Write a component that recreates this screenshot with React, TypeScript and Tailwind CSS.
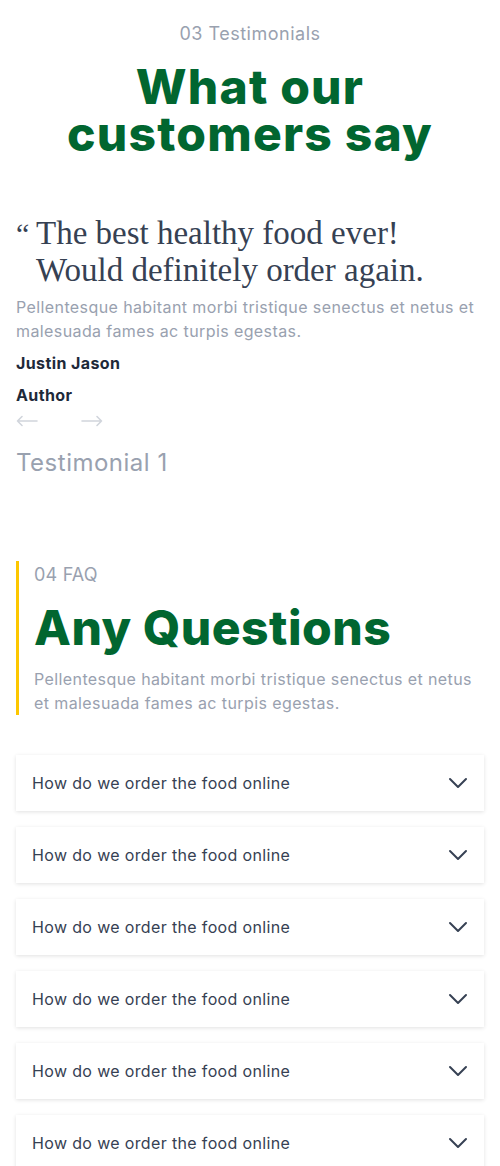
import React from "react";

const faqs = Array.from({ length: 6 }, () => "How do we order the food online");

function Chevron() {
  return (
    <svg width="20" height="12" viewBox="0 0 20 12" fill="none" className="text-gray-700">
      <path d="M2 2l8 8 8-8" stroke="currentColor" strokeWidth="2" strokeLinecap="round" strokeLinejoin="round" />
    </svg>
  );
}

function Arrow({ dir }: { dir: "left" | "right" }) {
  return (
    <svg width="22" height="12" viewBox="0 0 22 12" fill="none" className="text-gray-300">
      {dir === "left" ? (
        <path d="M21 6H1.5M1.5 6l4.5-4.5M1.5 6l4.5 4.5" stroke="currentColor" strokeWidth="1.6" strokeLinecap="round" />
      ) : (
        <path d="M1 6h19.5M20.5 6L16 1.5M20.5 6L16 10.5" stroke="currentColor" strokeWidth="1.6" strokeLinecap="round" />
      )}
    </svg>
  );
}

export default function App() {
  return (
    <div className="w-full bg-white font-['Inter',sans-serif]">
      {/* Testimonials */}
      <section className="px-4 pt-5">
        <p className="text-center text-lg leading-7 tracking-[0.5px] text-gray-400">03 Testimonials</p>
        <h2 className="mt-[15px] text-center text-5xl font-extrabold leading-[47px] tracking-[1.2px] text-green-800">
          What our
          <br />
          customers say
        </h2>

        <div className="mt-[58px] flex font-['Liberation_Serif',serif] text-[33px] leading-[37px] text-gray-700">
          <span className="w-5 shrink-0 text-[30px]">“</span>
          <p>
            The best healthy food ever!
            <br />
            Would definitely order again.
          </p>
        </div>
        <p className="mt-[6px] text-base leading-6 tracking-[0.4px] text-gray-400">
          Pellentesque habitant morbi tristique senectus et netus et malesuada fames ac turpis egestas.
        </p>
        <p className="mt-2 text-base font-bold leading-6 tracking-[0.4px] text-gray-800">Justin Jason</p>
        <p className="mt-2 text-base font-bold leading-6 tracking-[0.4px] text-gray-800">Author</p>
        <div className="mt-[6px] flex h-4 items-center gap-[43px]">
          <Arrow dir="left" />
          <Arrow dir="right" />
        </div>
        <p className="mt-[18px] text-2xl leading-8 tracking-[0.5px] text-gray-400">Testimonial 1</p>
      </section>

      {/* FAQ */}
      <section className="px-4 pt-[82px]">
        <div className="border-l-[3px] border-yellow-400 pl-[15px]">
          <p className="text-lg leading-7 tracking-[0.2px] text-gray-400">04 FAQ</p>
          <h2 className="mt-[15px] text-5xl font-extrabold leading-none tracking-[0.5px] text-green-800">
            Any Questions
          </h2>
          <p className="mt-[15px] text-base leading-6 tracking-[0.4px] text-gray-400">
            Pellentesque habitant morbi tristique senectus et netus et malesuada fames ac turpis egestas.
          </p>
        </div>

        <div className="mt-10 flex flex-col gap-4">
          {faqs.map((q, i) => (
            <div
              key={i}
              className="flex h-14 items-center justify-between bg-white px-4 shadow-[0_1px_4px_rgba(0,0,0,0.12)]"
            >
              <span className="text-base tracking-[0.35px] text-gray-700">{q}</span>
              <Chevron />
            </div>
          ))}
        </div>
      </section>
    </div>
  );
}
